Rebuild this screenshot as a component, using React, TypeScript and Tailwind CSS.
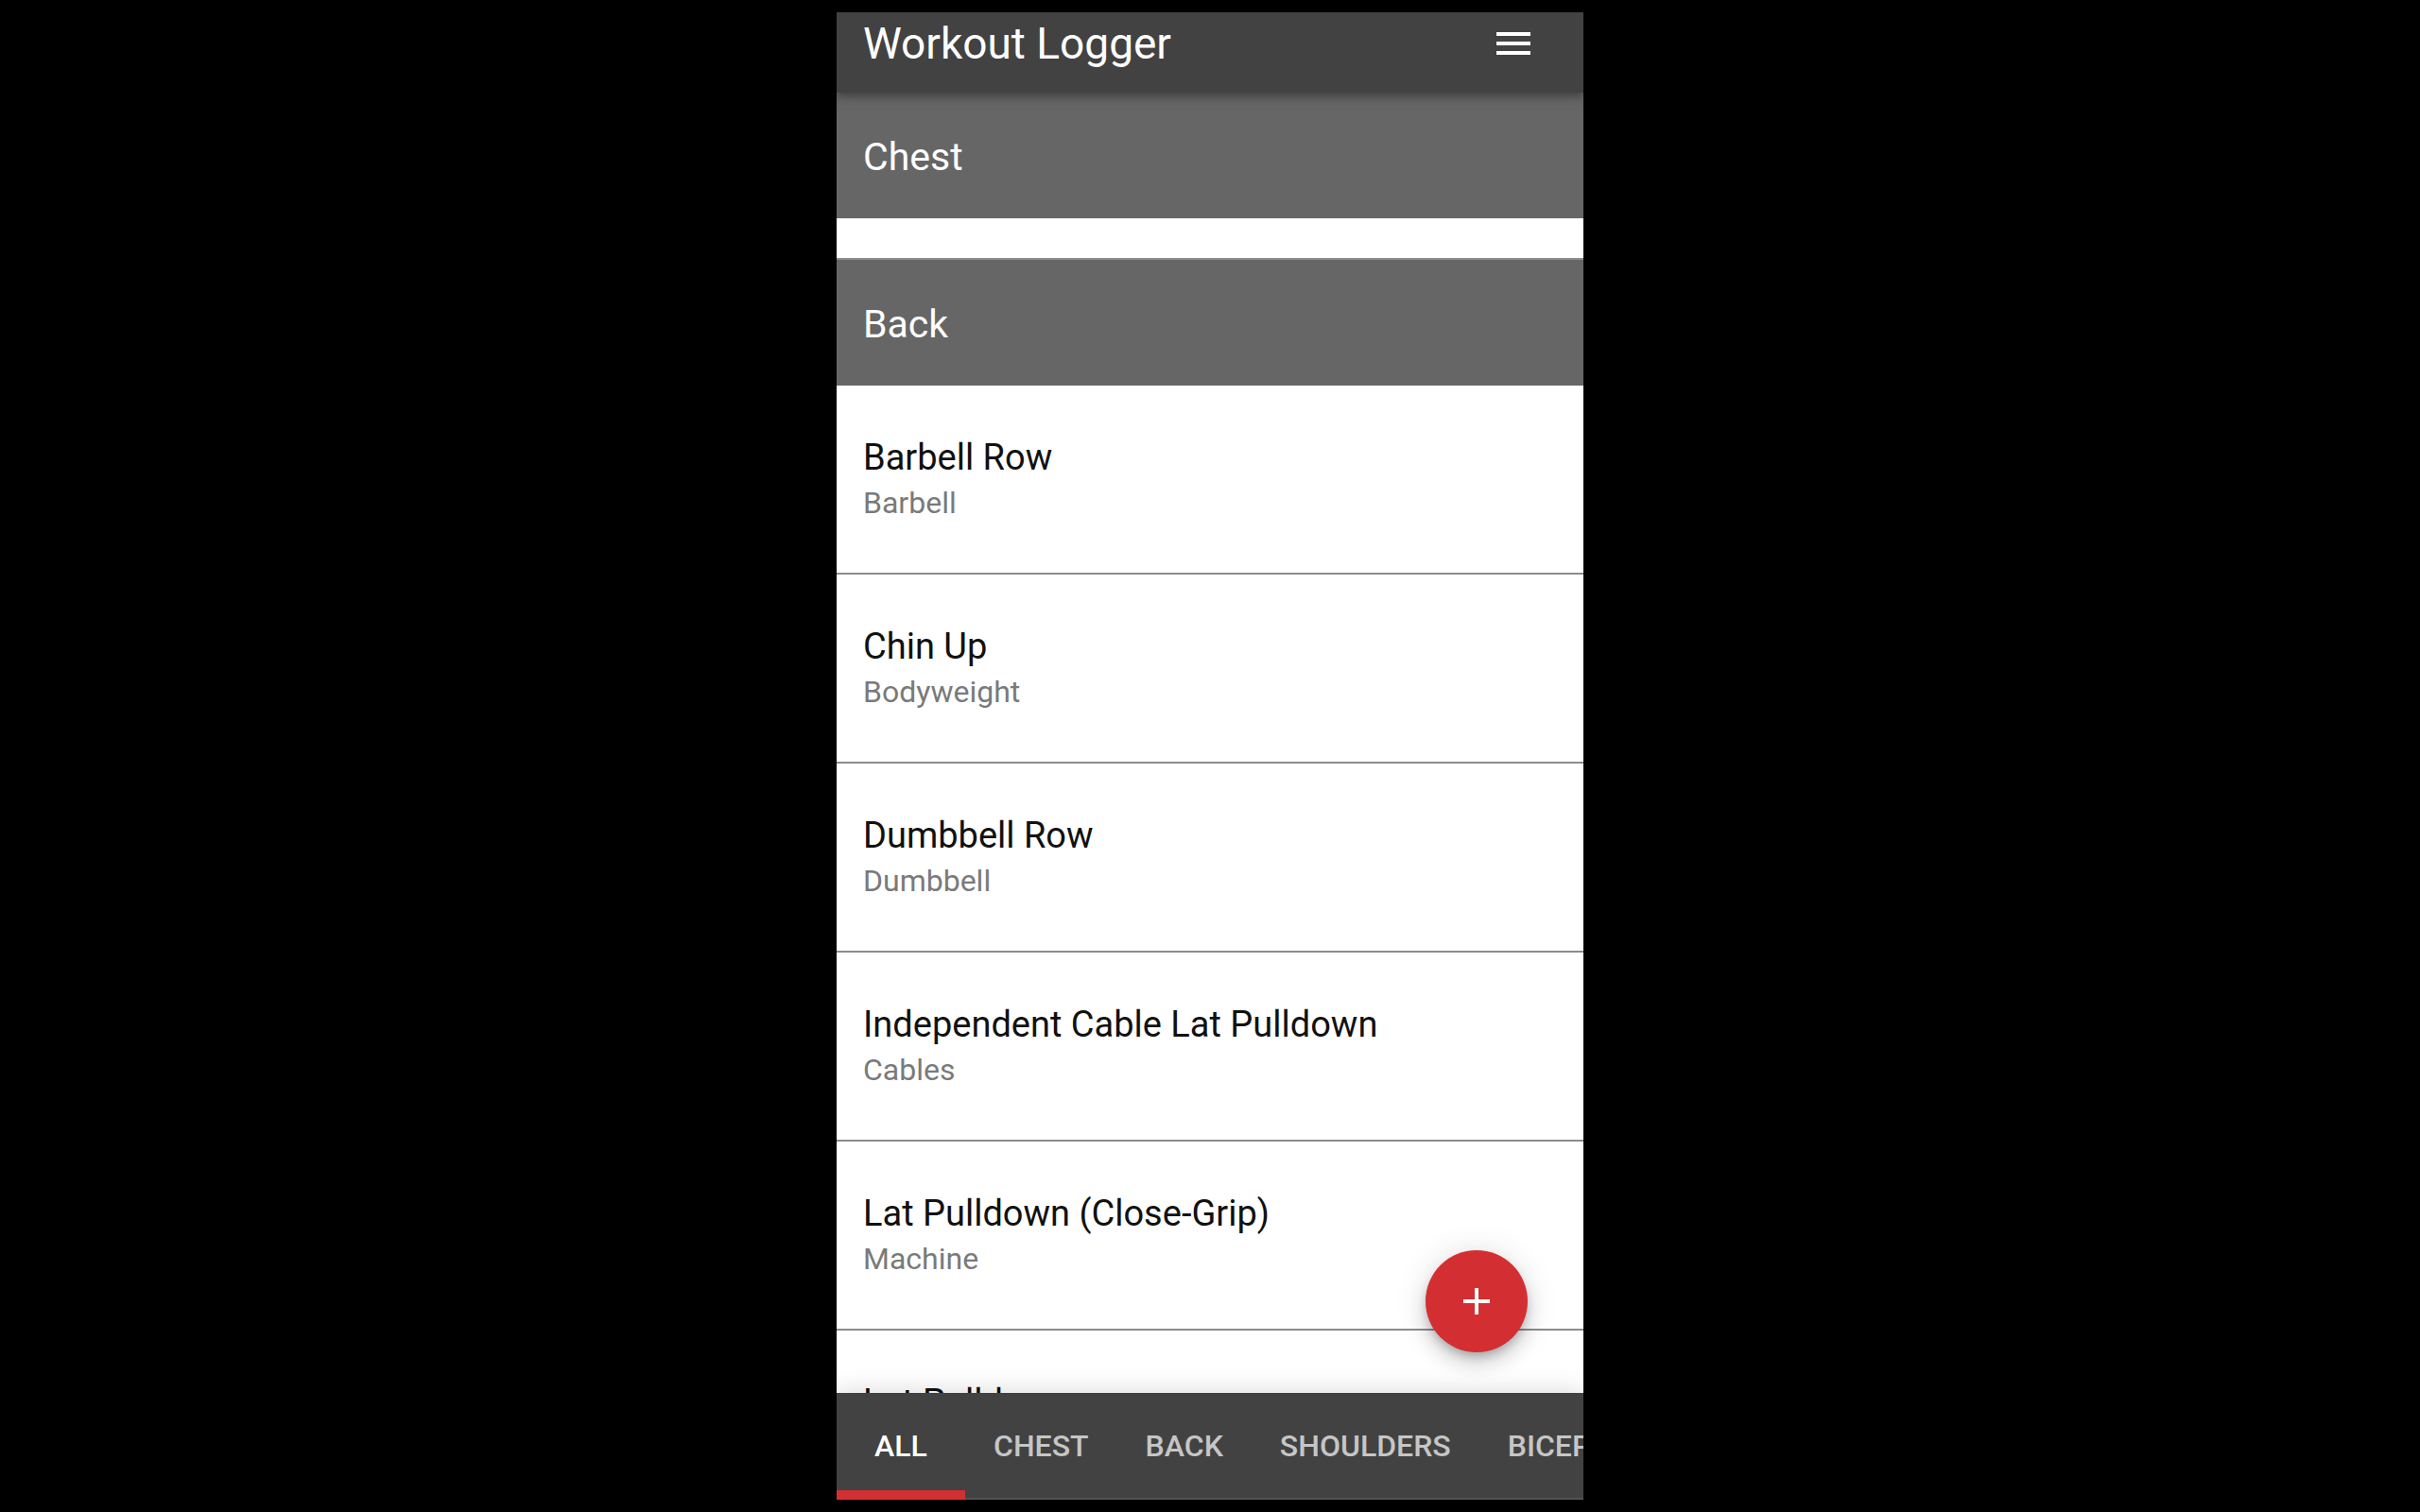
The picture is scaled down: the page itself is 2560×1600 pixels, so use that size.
import { useState } from "react";
import { MdAdd, MdMenu } from "react-icons/md";

type Exercise = { name: string; equipment: string };
type Group = { title: string; exercises: Exercise[] };

const groups: Group[] = [
  { title: "Chest", exercises: [] },
  {
    title: "Back",
    exercises: [
      { name: "Barbell Row", equipment: "Barbell" },
      { name: "Chin Up", equipment: "Bodyweight" },
      { name: "Dumbbell Row", equipment: "Dumbbell" },
      { name: "Independent Cable Lat Pulldown", equipment: "Cables" },
      { name: "Lat Pulldown (Close-Grip)", equipment: "Machine" },
      { name: "Lat Pulldown", equipment: "Machine" },
    ],
  },
];

const tabs = ["All", "Chest", "Back", "Shoulders", "Biceps"];

function Header() {
  return (
    <header className="relative z-10 flex shrink-0 items-start justify-between bg-[#424242] pt-[5px] pr-[50px] pb-6 pl-7 shadow-[0_4px_8px_rgba(0,0,0,0.3),0_2px_18px_rgba(0,0,0,0.12)]">
      <h1 className="text-[46px] leading-[56px] whitespace-nowrap">Workout Logger</h1>
      <button type="button" aria-label="Open menu" className="mt-1">
        <MdMenu className="size-12" />
      </button>
    </header>
  );
}

function ExerciseRow({ name, equipment }: Exercise) {
  return (
    <li className="h-[200px] shrink-0 border-b-2 border-[#8c8c8c] px-7 pt-[52px]">
      <p className="text-[38px] leading-[48px] whitespace-nowrap text-[#111111]">{name}</p>
      <p className="text-[32px] leading-[48px] whitespace-nowrap text-[#7a7a7a]">{equipment}</p>
    </li>
  );
}

function GroupSection({ title, exercises }: Group) {
  return (
    <section>
      <h2 className="bg-[#666666] px-7 pt-[42px] pb-[38px] text-[41px] leading-[53px]">{title}</h2>
      {exercises.length > 0 ? (
        <ul>
          {exercises.map((exercise) => (
            <ExerciseRow key={exercise.name} {...exercise} />
          ))}
        </ul>
      ) : (
        <div className="h-11 border-b-2 border-[#8c8c8c]" />
      )}
    </section>
  );
}

function TabBar({ active, onSelect }: { active: string; onSelect: (tab: string) => void }) {
  return (
    <nav className="flex overflow-hidden bg-[#424242]">
      {tabs.map((tab) => (
        <button
          key={tab}
          type="button"
          aria-current={tab === active ? "page" : undefined}
          onClick={() => onSelect(tab)}
          className={
            tab === active
              ? "min-w-[136px] shrink-0 border-b-10 border-[#d32f32] px-[30px] pt-9 pb-[27px] text-[32px] leading-10 font-medium text-white uppercase"
              : "min-w-[136px] shrink-0 border-b-2 border-[#525252] px-[30px] pt-9 pb-[35px] text-[32px] leading-10 font-medium text-[#c6c6c6] uppercase"
          }
        >
          {tab}
        </button>
      ))}
    </nav>
  );
}

export default function App() {
  const [active, setActive] = useState("All");

  return (
    <div className="h-screen bg-black py-[13px] font-['Roboto',sans-serif] text-white">
      <div className="relative mx-auto flex h-full w-full max-w-[790px] flex-col overflow-hidden bg-white">
        <Header />
        <main className="min-h-0 flex-1 overflow-hidden">
          {groups.map((group) => (
            <GroupSection key={group.title} {...group} />
          ))}
        </main>
        <div className="relative z-10 shadow-[0_-2px_24px_rgba(0,0,0,0.14)]">
          <TabBar active={active} onSelect={setActive} />
        </div>
        <button
          type="button"
          aria-label="Add exercise"
          className="absolute right-[59px] bottom-[156px] z-20 flex size-[108px] items-center justify-center rounded-full bg-[#d32f32] shadow-[0_6px_10px_-2px_rgba(0,0,0,0.2),0_12px_20px_rgba(0,0,0,0.14),0_2px_36px_rgba(0,0,0,0.12)]"
        >
          <MdAdd className="size-12" />
        </button>
      </div>
    </div>
  );
}
